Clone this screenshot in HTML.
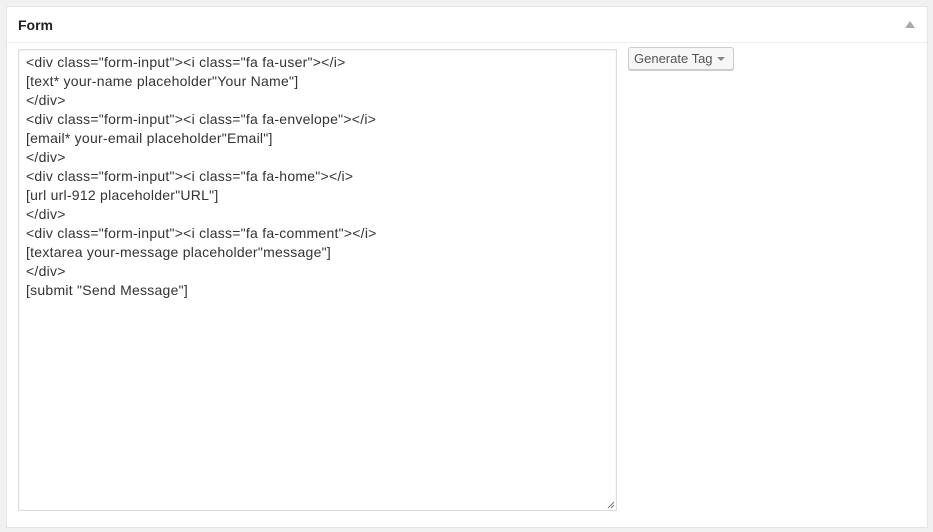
<!DOCTYPE html>
<html><head><style>
body{margin:0;background:#f1f1f1;width:933px;height:532px;font-family:"Liberation Sans",sans-serif;position:relative;overflow:hidden}
.panel{position:absolute;left:6px;top:6px;width:920px;height:520px;background:#fff;border:1px solid #e5e5e5}
.hd{height:35px;border-bottom:1px solid #eee;position:relative}
.hd span{position:absolute;left:11px;top:10px;font-size:14px;font-weight:bold;color:#222}
.tri{position:absolute;right:12px;top:14px;width:0;height:0;border-left:5px solid transparent;border-right:5px solid transparent;border-bottom:7px solid #aaa}
.ta{position:absolute;left:11px;top:42px;width:597px;height:460px;border:1px solid #ddd;box-shadow:inset 0 1px 2px rgba(0,0,0,.07)}
.ta pre{margin:0;position:absolute;left:7px;top:3px;font-family:"Liberation Sans",sans-serif;font-size:14px;letter-spacing:0.25px;line-height:19px;color:#333}
.btn{position:absolute;left:621px;top:40px;width:99px;height:21px;border:1px solid #ccc;border-radius:3px;background:#f7f7f7;box-shadow:0 1px 0 #ccc;font-size:13px;color:#555;line-height:21px;padding-left:5px;box-sizing:content-box}
.btn i{position:absolute;right:8px;top:9px;border-left:4px solid transparent;border-right:4px solid transparent;border-top:4px solid #888}
</style></head><body>
<div class="panel">
<div class="hd"><span>Form</span><div class="tri"></div></div>
<div class="ta"><pre>&lt;div class="form-input"&gt;&lt;i class="fa fa-user"&gt;&lt;/i&gt;
[text* your-name placeholder"Your Name"]
&lt;/div&gt;
&lt;div class="form-input"&gt;&lt;i class="fa fa-envelope"&gt;&lt;/i&gt;
[email* your-email placeholder"Email"]
&lt;/div&gt;
&lt;div class="form-input"&gt;&lt;i class="fa fa-home"&gt;&lt;/i&gt;
[url url-912 placeholder"URL"]
&lt;/div&gt;
&lt;div class="form-input"&gt;&lt;i class="fa fa-comment"&gt;&lt;/i&gt;
[textarea your-message placeholder"message"]
&lt;/div&gt;
[submit "Send Message"]</pre>
<svg style="position:absolute;right:1px;bottom:1px" width="8" height="8"><path d="M1 7L7 1M4 7L7 4" stroke="#777" stroke-width="1"/></svg>
</div>
<div class="btn">Generate Tag<i></i></div>
</div>
</body></html>
